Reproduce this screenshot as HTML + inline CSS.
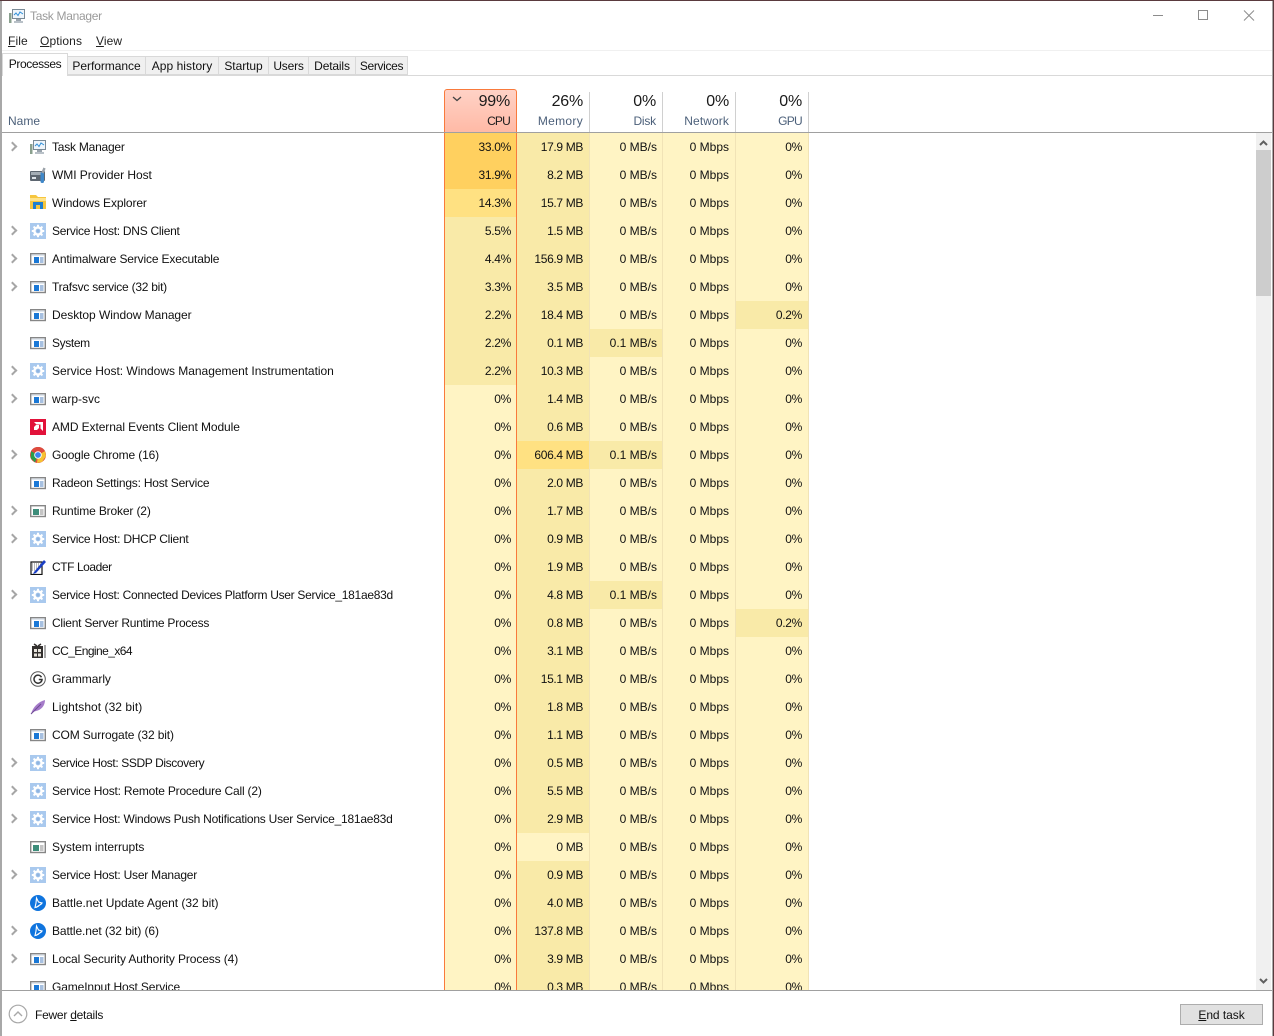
<!DOCTYPE html>
<html><head><meta charset="utf-8"><title>Task Manager</title>
<style>
html,body{margin:0;padding:0;background:#fff}
#w{position:relative;width:1274px;height:1036px;overflow:hidden;background:#fff;font:12px/16px "Liberation Sans",sans-serif;color:#111}
#w div,#w span,#w svg{position:absolute}
.edge{background:#a8a8a8}
.t{top:56px;height:19px;background:#f0f0f0;border:1px solid #d9d9d9;border-left:0;text-align:center;line-height:19px;box-sizing:border-box;letter-spacing:-.05px}
.menu{top:33px;letter-spacing:.1px;color:#222}
.menu u{text-decoration:underline}
.hd{top:92px;height:40px;border-right:1px solid #d0d0d0;box-sizing:border-box;text-align:right;padding-right:6px}
.hd b{display:block;font-weight:400;font-size:16px;line-height:19px;color:#1a1a1a;letter-spacing:-.2px}
.hd i{display:block;font-style:normal;line-height:20px;color:#4c607a}
#rows{left:2px;top:133px;width:1254px;height:857px;overflow:hidden}
.r{left:0;width:1254px;height:28px}
.r p{position:absolute;left:50px;top:6px;margin:0;white-space:nowrap}
.r em{position:absolute;top:0;height:28px;line-height:28px;font-style:normal;text-align:right;box-sizing:border-box;padding-right:6px;background:#fff4c4;border-right:1px solid #f1e3b6;width:73px}
.r em:nth-of-type(1){left:443px;width:72px;padding-right:6px;border-right:0;letter-spacing:-.3px}
.r em:nth-of-type(2){left:515px;padding-right:6px;letter-spacing:-.35px}
.r em:nth-of-type(3){left:588px;padding-right:5px}
.r em:nth-of-type(4){left:661px;padding-right:6px}
.r em:nth-of-type(5){left:734px;padding-right:6px;letter-spacing:-.3px}
.r em.h1{background:#ffd05f}
.r em.h2{background:#ffe182}
.r em.h3{background:#f9eaa8}
.r u{position:absolute;left:7px;top:10px;width:5px;height:5px;border-top:2px solid #a6a6a6;border-right:2px solid #a6a6a6;transform:rotate(45deg)}
.r svg{left:28px;top:6px;width:16px;height:16px}
</style></head><body>
<div id="w">
<svg width="0" height="0" style="left:0;top:0"><defs>
<symbol id="a" viewBox="0 0 16 16"><rect x=".7" y="2.700" width="14.600" height="10.800" fill="#fff" stroke="#868686" stroke-width="1.400"/><rect x="1.400" y="3.400" width="13.200" height="1.600" fill="#dfe6ee"/><rect x="4" y="6" width="5" height="6" fill="#1a78d6"/><path d="M10 7h3.500M10 9h3.500M10 11h3.500" stroke="#4f82c0"/></symbol>
<symbol id="g" viewBox="0 0 16 16"><rect width="16" height="16" fill="#a9c9ee"/><circle cx="8" cy="8" r="3.600" fill="none" stroke="#fff" stroke-width="2.400"/><path d="M8 1.800v2.400M8 11.800v2.400M1.800 8h2.400M11.800 8h2.400M3.600 3.600l1.700 1.700M10.700 10.700l1.700 1.700M3.600 12.400l1.700-1.700M10.700 5.300l1.700-1.700" stroke="#fff" stroke-width="2"/><circle cx="8" cy="8" r="1.600" fill="#8fb4e0"/></symbol>
<symbol id="tm" viewBox="0 0 16 16"><rect x="3.500" y="1.500" width="12" height="9" fill="#eef5fb" stroke="#7a8a96"/><path d="M5 7l2-2 2 2.500 2-3.500 3 2" fill="none" stroke="#2f8fd8"/><rect x="7" y="11" width="5" height="2" fill="#9aa4ad"/><rect x="5" y="13" width="9" height="2" fill="#b9c1c8"/><rect x="0" y="5" width="2.500" height="10" fill="#8aa08e"/></symbol>
<symbol id="wm" viewBox="0 0 16 16"><rect x="0" y="4" width="15" height="10" rx="1" fill="#5d6670"/><rect x="1" y="5" width="13" height="3" fill="#a4adb5"/><rect x="2" y="10" width="4" height="2" fill="#dfe5ea"/><rect x="10.500" y="5" width="3.500" height="11" rx="1.500" fill="#3f88c9"/><path d="M12.500 6l2-5" stroke="#9aa1a8" stroke-width="2.400"/></symbol>
<symbol id="ex" viewBox="0 0 16 16"><path d="M0 0h6l2 2h8v12H0z" fill="#f6c63f"/><rect y="3" width="16" height="3" fill="#ffe38a"/><rect x="3" y="7" width="10" height="7" fill="#1f7fd0"/><rect x="6" y="10" width="4" height="4" fill="#f6c63f"/></symbol>
<symbol id="amd" viewBox="0 0 16 16"><rect width="16" height="16" fill="#e2123a"/><path d="M4 3h9v9l-2.500-2.500V5.500H6.500zM4 8l2-2h3v3l-2 2H4z" fill="#fff"/></symbol>
<symbol id="ch" viewBox="0 0 16 16"><circle cx="8" cy="8" r="8" fill="#dd4b3e"/><path d="M8 8L1.100 4 .6 11 5 15.500z" fill="#2a9d4a"/><path d="M8 8l7-4 1 5-4 6-5 1z" fill="#f6c233"/><path d="M8 8L1.100 4A8 8 0 0 1 15 4z" fill="#dd4b3e"/><circle cx="8" cy="8" r="3.800" fill="#fff"/><circle cx="8" cy="8" r="2.900" fill="#3f84ee"/></symbol>
<symbol id="rb" viewBox="0 0 16 16"><rect x=".7" y="2.700" width="14.600" height="10.800" fill="#fff" stroke="#868686" stroke-width="1.400"/><rect x="3" y="6" width="6" height="6" fill="#3d8d7a"/><path d="M10 7h3.500M10 9h3.500M10 11h3.500" stroke="#8a8a8a"/></symbol>
<symbol id="ctf" viewBox="0 0 16 16"><rect x="1" y="3" width="11" height="12.500" fill="#fff" stroke="#111" stroke-width="1.200"/><path d="M2 5h9M2 7h7M2 9h5M2 11h4" stroke="#777" stroke-dasharray="1 1"/><path d="M4 13L14 1l2 2L6 14l-3 1z" fill="#1b3fc4"/></symbol>
<symbol id="cc" viewBox="0 0 16 16"><rect x="2" y="3" width="11" height="12" fill="#33302e"/><path d="M4 6h3v3H4zM8 6h3v3H8zM4 10.500h3v3H4zM8 10.500h3v3H8z" fill="#e8e4dc"/><path d="M4 1l3 2M11 1L8 3" stroke="#33302e" stroke-width="1.500"/><path d="M15 2v13" stroke="#555"/></symbol>
<symbol id="gr" viewBox="0 0 16 16"><circle cx="8" cy="8" r="7.300" fill="#fff" stroke="#555"/><path d="M11.500 6.200A4 4 0 1 0 12 8.500H8.800" fill="none" stroke="#333" stroke-width="1.500"/></symbol>
<symbol id="ls" viewBox="0 0 16 16"><path d="M1 15C3 8 8 3 15 1c0 6-4 10-9 11-2 .5-3 1-5 3z" fill="#a57bc9"/><path d="M1 15L11 5" stroke="#6f4a95"/></symbol>
<symbol id="bn" viewBox="0 0 16 16"><circle cx="8" cy="8" r="8" fill="#0f74de"/><path d="M6.500 3l2 4 3.500 1-4 3.500-3 1 1-4.500zM6 12.500l6-4" fill="none" stroke="#fff" stroke-width="1.100"/></symbol>
</defs></svg>

<div style="left:0;top:0;width:1274px;height:1px;background:#5a3a3e"></div>
<div class="edge" style="left:0;top:1px;width:2px;height:1035px"></div>
<div class="edge" style="left:1272px;top:1px;width:1px;height:1035px"></div>
<div style="left:1273px;top:0;width:1px;height:1036px;background:#5a3a3e"></div>

<svg style="left:9px;top:8px" width="16" height="16"><use href="#tm"/></svg>
<span style="left:30px;top:8px;color:#9a9a9a;letter-spacing:-.3px">Task Manager</span>
<svg style="left:1150px;top:8px" width="110" height="16" fill="none" stroke="#8c8c8c"><path d="M3 7.500h10"/><rect x="48.500" y="2.500" width="9" height="9"/><path d="M94 2.500l10 10M104 2.500l-10 10"/></svg>

<span class="menu" style="left:8px"><u>F</u>ile</span>
<span class="menu" style="left:40px"><u>O</u>ptions</span>
<span class="menu" style="left:96px"><u>V</u>iew</span>
<div style="left:2px;top:50px;width:1270px;height:1px;background:#f0f0f0"></div>

<div style="left:2px;top:75px;width:1270px;height:1px;background:#d9d9d9"></div>
<div class="t" style="left:68px;width:78px">Performance</div>
<div class="t" style="left:146px;width:73px;letter-spacing:.05px">App history</div>
<div class="t" style="left:219px;width:50px">Startup</div>
<div class="t" style="left:269px;width:40px;letter-spacing:-.2px">Users</div>
<div class="t" style="left:309px;width:47px;letter-spacing:-.15px">Details</div>
<div class="t" style="left:356px;width:52px;letter-spacing:-.35px">Services</div>
<div style="left:2px;top:53px;width:66px;height:23px;background:#fff;border:1px solid #d9d9d9;border-bottom:0;box-sizing:border-box;text-align:center;line-height:20px;letter-spacing:-.4px">Processes</div>

<span style="left:8px;top:113px;color:#4c607a">Name</span>
<div style="left:444px;top:89px;width:73px;height:44px;box-sizing:border-box;background:linear-gradient(#ffd2c6,#ffb9a5);border:1px solid #f97a3c;border-bottom:0;border-radius:3px 3px 0 0"></div>
<svg style="left:452px;top:96px" width="10" height="6" fill="none" stroke="#444" stroke-width="1.300"><path d="M1 1l4 3.500L9 1"/></svg>
<div class="hd" style="left:445px;width:71px;border:0"><b>99%</b><i style="color:#1a1a1a;letter-spacing:-.8px">CPU</i></div>
<div class="hd" style="left:517px;width:73px"><b>26%</b><i style="letter-spacing:.3px">Memory</i></div>
<div class="hd" style="left:590px;width:73px"><b>0%</b><i style="letter-spacing:-.2px">Disk</i></div>
<div class="hd" style="left:663px;width:73px"><b>0%</b><i style="letter-spacing:.1px">Network</i></div>
<div class="hd" style="left:736px;width:73px"><b>0%</b><i style="letter-spacing:-.7px">GPU</i></div>
<div style="left:2px;top:132px;width:1270px;height:1px;background:#a0a0a0"></div>

<div id="rows">
<div class="r" style="top:0"><u></u><svg><use href="#tm"/></svg><p style="letter-spacing:-.23px">Task Manager</p><em class="h1">33.0%</em><em class="h3">17.9 MB</em><em>0 MB/s</em><em>0 Mbps</em><em>0%</em></div>
<div class="r" style="top:28px"><svg><use href="#wm"/></svg><p style="letter-spacing:-.05px">WMI Provider Host</p><em class="h1">31.9%</em><em class="h3">8.2 MB</em><em>0 MB/s</em><em>0 Mbps</em><em>0%</em></div>
<div class="r" style="top:56px"><svg><use href="#ex"/></svg><p style="letter-spacing:-.12px">Windows Explorer</p><em class="h2">14.3%</em><em class="h3">15.7 MB</em><em>0 MB/s</em><em>0 Mbps</em><em>0%</em></div>
<div class="r" style="top:84px"><u></u><svg><use href="#g"/></svg><p style="letter-spacing:-.27px">Service Host: DNS Client</p><em class="h3">5.5%</em><em class="h3">1.5 MB</em><em>0 MB/s</em><em>0 Mbps</em><em>0%</em></div>
<div class="r" style="top:112px"><u></u><svg><use href="#a"/></svg><p style="letter-spacing:-.16px">Antimalware Service Executable</p><em class="h3">4.4%</em><em class="h3">156.9 MB</em><em>0 MB/s</em><em>0 Mbps</em><em>0%</em></div>
<div class="r" style="top:140px"><u></u><svg><use href="#a"/></svg><p style="letter-spacing:-.25px">Trafsvc service (32 bit)</p><em class="h3">3.3%</em><em class="h3">3.5 MB</em><em>0 MB/s</em><em>0 Mbps</em><em>0%</em></div>
<div class="r" style="top:168px"><svg><use href="#a"/></svg><p style="letter-spacing:-.05px">Desktop Window Manager</p><em class="h3">2.2%</em><em class="h3">18.4 MB</em><em>0 MB/s</em><em>0 Mbps</em><em class="h3">0.2%</em></div>
<div class="r" style="top:196px"><svg><use href="#a"/></svg><p style="letter-spacing:-.38px">System</p><em class="h3">2.2%</em><em class="h3">0.1 MB</em><em class="h3">0.1 MB/s</em><em>0 Mbps</em><em>0%</em></div>
<div class="r" style="top:224px"><u></u><svg><use href="#g"/></svg><p style="letter-spacing:-.02px">Service Host: Windows Management Instrumentation</p><em class="h3">2.2%</em><em class="h3">10.3 MB</em><em>0 MB/s</em><em>0 Mbps</em><em>0%</em></div>
<div class="r" style="top:252px"><u></u><svg><use href="#a"/></svg><p>warp-svc</p><em>0%</em><em class="h3">1.4 MB</em><em>0 MB/s</em><em>0 Mbps</em><em>0%</em></div>
<div class="r" style="top:280px"><svg><use href="#amd"/></svg><p style="letter-spacing:-.09px">AMD External Events Client Module</p><em>0%</em><em class="h3">0.6 MB</em><em>0 MB/s</em><em>0 Mbps</em><em>0%</em></div>
<div class="r" style="top:308px"><u></u><svg><use href="#ch"/></svg><p style="letter-spacing:-.13px">Google Chrome (16)</p><em>0%</em><em class="h2">606.4 MB</em><em class="h3">0.1 MB/s</em><em>0 Mbps</em><em>0%</em></div>
<div class="r" style="top:336px"><svg><use href="#a"/></svg><p style="letter-spacing:-.21px">Radeon Settings: Host Service</p><em>0%</em><em class="h3">2.0 MB</em><em>0 MB/s</em><em>0 Mbps</em><em>0%</em></div>
<div class="r" style="top:364px"><u></u><svg><use href="#rb"/></svg><p style="letter-spacing:-.15px">Runtime Broker (2)</p><em>0%</em><em class="h3">1.7 MB</em><em>0 MB/s</em><em>0 Mbps</em><em>0%</em></div>
<div class="r" style="top:392px"><u></u><svg><use href="#g"/></svg><p style="letter-spacing:-.24px">Service Host: DHCP Client</p><em>0%</em><em class="h3">0.9 MB</em><em>0 MB/s</em><em>0 Mbps</em><em>0%</em></div>
<div class="r" style="top:420px"><svg><use href="#ctf"/></svg><p style="letter-spacing:-.43px">CTF Loader</p><em>0%</em><em class="h3">1.9 MB</em><em>0 MB/s</em><em>0 Mbps</em><em>0%</em></div>
<div class="r" style="top:448px"><u></u><svg><use href="#g"/></svg><p style="letter-spacing:-.29px">Service Host: Connected Devices Platform User Service_181ae83d</p><em>0%</em><em class="h3">4.8 MB</em><em class="h3">0.1 MB/s</em><em>0 Mbps</em><em>0%</em></div>
<div class="r" style="top:476px"><svg><use href="#a"/></svg><p style="letter-spacing:-.24px">Client Server Runtime Process</p><em>0%</em><em class="h3">0.8 MB</em><em>0 MB/s</em><em>0 Mbps</em><em class="h3">0.2%</em></div>
<div class="r" style="top:504px"><svg><use href="#cc"/></svg><p style="letter-spacing:-.57px">CC_Engine_x64</p><em>0%</em><em class="h3">3.1 MB</em><em>0 MB/s</em><em>0 Mbps</em><em>0%</em></div>
<div class="r" style="top:532px"><svg><use href="#gr"/></svg><p style="letter-spacing:-.05px">Grammarly</p><em>0%</em><em class="h3">15.1 MB</em><em>0 MB/s</em><em>0 Mbps</em><em>0%</em></div>
<div class="r" style="top:560px"><svg><use href="#ls"/></svg><p style="letter-spacing:.05px">Lightshot (32 bit)</p><em>0%</em><em class="h3">1.8 MB</em><em>0 MB/s</em><em>0 Mbps</em><em>0%</em></div>
<div class="r" style="top:588px"><svg><use href="#a"/></svg><p style="letter-spacing:-.13px">COM Surrogate (32 bit)</p><em>0%</em><em class="h3">1.1 MB</em><em>0 MB/s</em><em>0 Mbps</em><em>0%</em></div>
<div class="r" style="top:616px"><u></u><svg><use href="#g"/></svg><p style="letter-spacing:-.39px">Service Host: SSDP Discovery</p><em>0%</em><em class="h3">0.5 MB</em><em>0 MB/s</em><em>0 Mbps</em><em>0%</em></div>
<div class="r" style="top:644px"><u></u><svg><use href="#g"/></svg><p style="letter-spacing:-.2px">Service Host: Remote Procedure Call (2)</p><em>0%</em><em class="h3">5.5 MB</em><em>0 MB/s</em><em>0 Mbps</em><em>0%</em></div>
<div class="r" style="top:672px"><u></u><svg><use href="#g"/></svg><p style="letter-spacing:-.23px">Service Host: Windows Push Notifications User Service_181ae83d</p><em>0%</em><em class="h3">2.9 MB</em><em>0 MB/s</em><em>0 Mbps</em><em>0%</em></div>
<div class="r" style="top:700px"><svg><use href="#rb"/></svg><p style="letter-spacing:-.06px">System interrupts</p><em>0%</em><em>0 MB</em><em>0 MB/s</em><em>0 Mbps</em><em>0%</em></div>
<div class="r" style="top:728px"><u></u><svg><use href="#g"/></svg><p style="letter-spacing:-.22px">Service Host: User Manager</p><em>0%</em><em class="h3">0.9 MB</em><em>0 MB/s</em><em>0 Mbps</em><em>0%</em></div>
<div class="r" style="top:756px"><svg><use href="#bn"/></svg><p style="letter-spacing:-.03px">Battle.net Update Agent (32 bit)</p><em>0%</em><em class="h3">4.0 MB</em><em>0 MB/s</em><em>0 Mbps</em><em>0%</em></div>
<div class="r" style="top:784px"><u></u><svg><use href="#bn"/></svg><p style="letter-spacing:-.11px">Battle.net (32 bit) (6)</p><em>0%</em><em class="h3">137.8 MB</em><em>0 MB/s</em><em>0 Mbps</em><em>0%</em></div>
<div class="r" style="top:812px"><u></u><svg><use href="#a"/></svg><p style="letter-spacing:-.11px">Local Security Authority Process (4)</p><em>0%</em><em class="h3">3.9 MB</em><em>0 MB/s</em><em>0 Mbps</em><em>0%</em></div>
<div class="r" style="top:840px"><svg><use href="#a"/></svg><p style="letter-spacing:-.12px">GameInput Host Service</p><em>0%</em><em class="h3">0.3 MB</em><em>0 MB/s</em><em>0 Mbps</em><em>0%</em></div>
</div>
<div style="left:444px;top:133px;width:1px;height:857px;background:#f97a3c"></div>
<div style="left:516px;top:133px;width:1px;height:857px;background:#f97a3c"></div>

<div style="left:1256px;top:133px;width:15px;height:857px;background:#f0f0f0"></div>
<div style="left:1256px;top:150px;width:15px;height:146px;background:#cdcdcd"></div>
<svg style="left:1256px;top:133px" width="15" height="857" fill="none" stroke="#606060" stroke-width="2"><path d="M4 12l3.500-3.500L11 12M4 846l3.500 3.500L11 846"/></svg>

<div style="left:2px;top:990px;width:1270px;height:1px;background:#a0a0a0"></div>
<svg style="left:8px;top:1004px" width="20" height="20" fill="none" stroke="#a8a8a8"><circle cx="10" cy="10" r="8.800" stroke-width="1.200"/><path d="M6 12l4-4 4 4" stroke-width="1.400"/></svg>
<span style="left:35px;top:1007px;letter-spacing:-.25px">Fewer <u>d</u>etails</span>
<div style="left:1180px;top:1004px;width:83px;height:21px;box-sizing:border-box;background:#e1e1e1;border:1px solid #adadad;text-align:center;line-height:20px;letter-spacing:-.05px"><u>E</u>nd task</div>
</div>
</body></html>
